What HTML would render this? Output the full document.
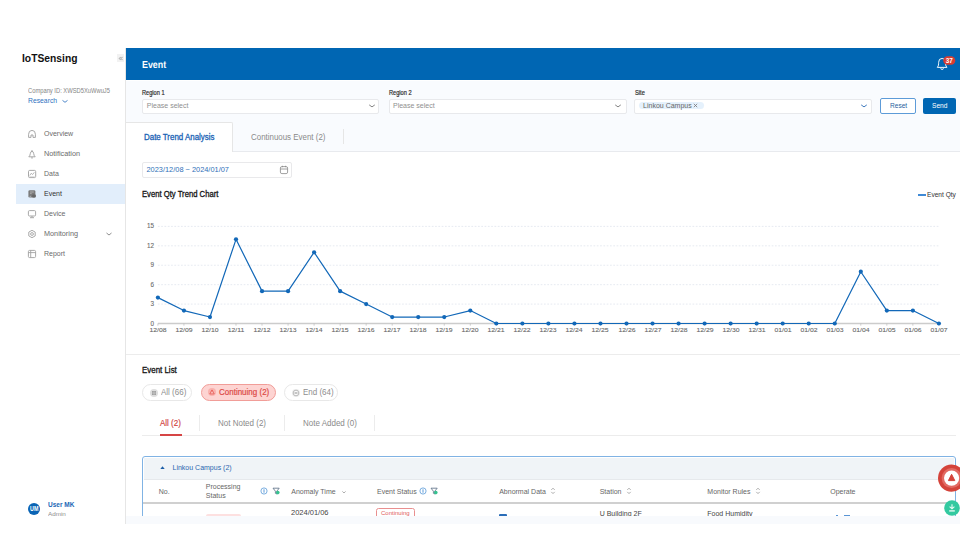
<!DOCTYPE html>
<html><head><meta charset="utf-8">
<style>
html,body{margin:0;padding:0;width:960px;height:540px;overflow:hidden;background:#fff;}
body{font-family:"Liberation Sans",sans-serif;position:relative;}
.a{position:absolute;}
.t{position:absolute;white-space:nowrap;line-height:1;transform-origin:0 0;}
.sb{left:16px;top:48px;width:109px;height:476px;background:#fff;border-right:1px solid #e6e6e6;}
.mi{color:#6b6b6b;font-size:7px;left:44px;}
.ico{position:absolute;left:28px;width:8px;height:8px;}
.hdr{left:126px;top:48px;width:834px;height:32px;background:#0066b3;}
.flt{left:126px;top:80px;width:834px;height:72px;background:#f9fbfe;border-bottom:1px solid #e8eaee;box-sizing:border-box;}
.inp{position:absolute;top:98.5px;height:15.3px;background:#fff;border:1px solid #e8e9ec;border-radius:2px;box-sizing:border-box;}
.lbl{font-size:6.4px;color:#2a2a2a;top:89.5px;-webkit-text-stroke:0.18px #2a2a2a;}
.ph{font-size:7px;color:#8f8f8f;top:101.8px;}

.yl{left:130px;width:24px;text-align:right;font-size:6.3px;color:#6a6a6a;-webkit-text-stroke:0.1px #6a6a6a;}
.xl{top:327px;width:30px;text-align:center;font-size:6.2px;color:#6a6a6a;-webkit-text-stroke:0.1px #6a6a6a;transform:scaleX(1.1);transform-origin:15px 0;}
.chip{position:absolute;top:384.2px;height:16.9px;border-radius:9px;box-sizing:border-box;border:1px solid #e8e8e8;background:#fff;}
.ct{font-size:8.3px;transform:scaleX(0.964);top:387.6px;color:#8e8e8e;}
.st{font-size:8.3px;transform:scaleX(0.964);top:418.5px;color:#8a8a8a;}
.th{font-size:7px;color:#666;}
.td{font-size:7px;color:#454545;top:508.9px;}
</style></head><body>

<!-- sidebar -->
<div class="a sb"></div>
<div class="t" style="left:21.9px;top:52.5px;font-size:11.2px;font-weight:bold;color:#111;transform:scaleX(0.92)">IoTSensing</div>
<div class="a" style="left:116.8px;top:53.8px;width:7.7px;height:8.5px;background:#f2f2f2;"></div>
<svg class="a" style="left:117px;top:54.6px" width="7" height="7" viewBox="0 0 7 7"><path d="M3.7 1.9 L2.3 3.5 L3.7 5.1 M5.5 1.9 L4.1 3.5 L5.5 5.1" fill="none" stroke="#8a8a8a" stroke-width="0.8"/></svg>
<div class="t" style="left:27.9px;top:88.3px;font-size:6.4px;color:#858585;transform:scaleX(0.905)">Company ID: XWSD5XuWwuJ5</div>
<div class="t" style="left:27.9px;top:96.9px;font-size:7px;color:#2f73c0;transform:scaleX(0.97)">Research</div>
<svg class="a" style="left:61px;top:97.5px" width="8" height="6" viewBox="0 0 8 6"><path d="M1.5 2.4 L4 4.3 L6.5 2.4" fill="none" stroke="#2f73c0" stroke-width="0.85"/></svg>

<div class="a" style="left:16px;top:184px;width:109px;height:20px;background:#e2eefb;"></div>
<div class="t mi" style="top:130px">Overview</div>
<div class="t mi" style="top:150px;transform:scaleX(1.04)">Notification</div>
<div class="t mi" style="top:170px">Data</div>
<div class="t mi" style="top:190px;color:#333">Event</div>
<div class="t mi" style="top:210px">Device</div>
<div class="t mi" style="top:230px;transform:scaleX(1.04)">Monitoring</div>
<div class="t mi" style="top:250px">Report</div>


<svg class="a" style="left:26px;top:128px" width="12" height="12" viewBox="0 0 12 12"><path d="M2.6 9.4 L2.6 6.3 Q2.6 2.4 6 2.4 Q9.4 2.4 9.4 6.3 L9.4 9.4 L7 9.4 L7 7 L5 7 L5 9.4 Z" fill="none" stroke="#a3a3a3" stroke-width="0.95" stroke-linejoin="round"/></svg>
<svg class="a" style="left:26px;top:147.5px" width="12" height="12" viewBox="0 0 12 12"><path d="M6 3.3 Q4.7 3.3 4.4 5.3 L3.7 7.8 L2.8 8.8 L9.2 8.8 L8.3 7.8 L7.6 5.3 Q7.3 3.3 6 3.3 Z M5.4 2.7 L6.6 2.7 M5.1 9.9 L6.9 9.9" fill="none" stroke="#a3a3a3" stroke-width="0.95" stroke-linejoin="round"/></svg>
<svg class="a" style="left:26px;top:168px" width="12" height="12" viewBox="0 0 12 12"><rect x="2.5" y="2.4" width="7.2" height="7.2" rx="1.2" fill="none" stroke="#a3a3a3" stroke-width="0.95"/><path d="M3.8 7.4 L5.2 5.3 L6.6 6.5 L8.3 4.3" fill="none" stroke="#a3a3a3" stroke-width="0.8"/><path d="M3.4 8.8 L8.8 8.8" stroke="#bbb" stroke-width="0.6"/></svg>
<svg class="a" style="left:26px;top:188px" width="12" height="12" viewBox="0 0 12 12"><rect x="2.4" y="2.3" width="7" height="7.3" rx="1.3" fill="#7a7a7a"/><path d="M4 4 L7.8 4 M4.2 5.6 L5.6 5.6" stroke="#c9c9c9" stroke-width="0.7"/><rect x="6.2" y="6.6" width="3.6" height="3" rx="0.8" fill="#666"/><path d="M3.6 8.8 L4.8 8.2" stroke="#cde" stroke-width="0.6"/></svg>
<svg class="a" style="left:26px;top:207.5px" width="12" height="12" viewBox="0 0 12 12"><rect x="2.4" y="2.6" width="7.2" height="5.4" rx="1.1" fill="none" stroke="#a3a3a3" stroke-width="0.95"/><path d="M6 8 L6 9.5 M4 9.7 L8 9.7" fill="none" stroke="#a3a3a3" stroke-width="0.95"/></svg>
<svg class="a" style="left:26px;top:227.5px" width="12" height="12" viewBox="0 0 12 12"><path d="M6 2.3 L9.2 4.1 L9.2 7.9 L6 9.7 L2.8 7.9 L2.8 4.1 Z" fill="none" stroke="#a3a3a3" stroke-width="0.95" stroke-linejoin="round"/><circle cx="6" cy="6" r="1.4" fill="none" stroke="#a3a3a3" stroke-width="0.9"/></svg>
<svg class="a" style="left:26px;top:247.5px" width="12" height="12" viewBox="0 0 12 12"><rect x="2.4" y="2.4" width="7.2" height="7.2" rx="1.2" fill="none" stroke="#a3a3a3" stroke-width="0.95"/><path d="M2.4 4.6 L9.6 4.6 M4.7 2.4 L4.7 9.6" stroke="#a3a3a3" stroke-width="0.9"/></svg>
<svg class="a" style="left:104.9px;top:230.5px" width="8" height="6" viewBox="0 0 8 6"><path d="M1.5 2 L4 4 L6.5 2" fill="none" stroke="#7a7a7a" stroke-width="0.85"/></svg>

<!-- header -->
<div class="a hdr"></div>
<div class="t" style="left:142.3px;top:61.4px;font-size:10.2px;font-weight:bold;color:#fff;transform:scaleX(0.87);text-rendering:geometricPrecision">Event</div>

<!-- filter -->
<div class="a flt"></div>
<div class="a" style="left:126px;top:80px;width:834px;height:1px;background:#fff"></div>
<div class="t lbl" style="left:142.1px;transform:scaleX(0.88)">Region 1</div>
<div class="t lbl" style="left:388.5px;transform:scaleX(0.88)">Region 2</div>
<div class="t lbl" style="left:634.7px;transform:scaleX(0.9)">Site</div>
<div class="inp" style="left:142.3px;width:237.1px"></div>
<div class="inp" style="left:388.5px;width:238px"></div>
<div class="inp" style="left:634.4px;width:237.7px"></div>
<div class="t ph" style="left:146.8px">Please select</div>
<div class="t ph" style="left:393px">Please select</div>

<!-- main white -->
<div class="a" style="left:126px;top:152px;width:834px;height:364px;background:#fff"></div>
<div class="a" style="left:126px;top:516px;width:834px;height:8px;background:#f8fafd"></div>


<!-- site tag, chevrons, buttons -->
<div class="a" style="left:639px;top:101.9px;width:64.5px;height:7.5px;border-radius:4px;background:#e5f1fc"></div>
<div class="t" style="left:643.1px;top:102.2px;font-size:7px;color:#666">Linkou Campus</div>
<svg class="a" style="left:692px;top:102px" width="7" height="7" viewBox="0 0 7 7"><path d="M1.8 1.8 L5.2 5.2 M5.2 1.8 L1.8 5.2" stroke="#777" stroke-width="0.8"/></svg>
<svg class="a" style="left:367.9px;top:103.3px" width="8" height="6" viewBox="0 0 8 6"><path d="M1.2 1.9 L4 3.9 L6.8 1.9" fill="none" stroke="#6f6f6f" stroke-width="0.85"/></svg>
<svg class="a" style="left:614px;top:103.3px" width="8" height="6" viewBox="0 0 8 6"><path d="M1.2 1.9 L4 3.9 L6.8 1.9" fill="none" stroke="#6f6f6f" stroke-width="0.85"/></svg>
<svg class="a" style="left:860.3px;top:103.3px" width="8" height="6" viewBox="0 0 8 6"><path d="M1.2 1.9 L4 3.9 L6.8 1.9" fill="none" stroke="#2b6cb5" stroke-width="0.9"/></svg>
<div class="a" style="left:880.4px;top:97.8px;width:35.2px;height:16px;box-sizing:border-box;border:1px solid #5d9bd8;border-radius:2px;background:#fff"></div>
<div class="t" style="left:889.5px;top:102.2px;font-size:7px;color:#2a5f9e;transform:scaleX(0.94)">Reset</div>
<div class="a" style="left:923.3px;top:97.8px;width:32.7px;height:16px;border-radius:2px;background:#0066b3"></div>
<div class="t" style="left:931.9px;top:102.2px;font-size:7px;color:#fff;transform:scaleX(0.94)">Send</div>

<!-- bell -->
<svg class="a" style="left:934px;top:55px" width="24" height="17" viewBox="0 0 24 17">
<path d="M3.3 12.4 Q4.6 11.2 4.6 8.8 L4.6 7.4 Q4.6 3.4 8.1 3.4 Q11.6 3.4 11.6 7.4 L11.6 8.8 Q11.6 11.2 12.9 12.4 Z" fill="none" stroke="#fff" stroke-width="0.95" stroke-linejoin="round"/>
<path d="M6.8 13.2 A1.3 1.3 0 0 0 9.4 13.2" fill="none" stroke="#fff" stroke-width="0.9"/>
<rect x="9.3" y="1.2" width="12" height="8.5" rx="4.25" fill="#d83c31"/>
</svg>
<div class="t" style="left:943.3px;top:57.5px;width:12px;text-align:center;font-size:6.4px;font-weight:bold;color:#fff;">37</div>

<!-- tabs -->
<div class="a" style="left:126px;top:121.6px;width:107px;height:30.4px;background:#fff;border-top:1px solid #e6e6e6;border-right:1px solid #e6e6e6;border-top-right-radius:2px;box-sizing:border-box"></div>
<div class="t" style="left:144px;top:133px;font-size:8.3px;color:#1b63b5;-webkit-text-stroke:0.3px #1b63b5;transform:scaleX(0.955)">Date Trend Analysis</div>
<div class="t" style="left:251px;top:133px;font-size:8.3px;color:#8a8a8a;transform:scaleX(0.955)">Continuous Event (2)</div>
<div class="a" style="left:343px;top:129px;width:1px;height:15.3px;background:#e6e6e6"></div>

<!-- date input -->
<div class="a" style="left:142.3px;top:162.3px;width:149.4px;height:15.6px;box-sizing:border-box;border:1px solid #e9e9eb;border-radius:2px;background:#fff"></div>
<div class="t" style="left:146.5px;top:166.3px;font-size:7.4px;color:#3070b8">2023/12/08 ~ 2024/01/07</div>
<svg class="a" style="left:279px;top:165px" width="10" height="10" viewBox="0 0 10 10"><rect x="1.4" y="1.6" width="7.2" height="7" rx="1.5" fill="none" stroke="#888" stroke-width="0.8"/><line x1="1.4" y1="4" x2="8.6" y2="4" stroke="#888" stroke-width="0.8"/><line x1="3.4" y1="0.8" x2="3.4" y2="2.2" stroke="#888" stroke-width="0.8"/><line x1="6.6" y1="0.8" x2="6.6" y2="2.2" stroke="#888" stroke-width="0.8"/></svg>

<!-- chart -->
<div class="t" style="left:142.3px;top:190px;font-size:8.3px;color:#141414;-webkit-text-stroke:0.3px #141414;transform:scaleX(0.925)">Event Qty Trend Chart</div>
<div class="a" style="left:917.8px;top:194.3px;width:8.1px;height:1.3px;background:#3f8ad6"></div>
<div class="t" style="left:926.9px;top:191px;font-size:7px;color:#333;transform:scaleX(0.94)">Event Qty</div>
<svg class="a" style="left:0;top:0" width="960" height="540" viewBox="0 0 960 540">
<line x1="157.9" y1="304.08" x2="938.9" y2="304.08" stroke="#dfe5ee" stroke-width="0.8" stroke-dasharray="1.7 1.6"/>
<line x1="157.9" y1="284.66" x2="938.9" y2="284.66" stroke="#dfe5ee" stroke-width="0.8" stroke-dasharray="1.7 1.6"/>
<line x1="157.9" y1="265.24" x2="938.9" y2="265.24" stroke="#dfe5ee" stroke-width="0.8" stroke-dasharray="1.7 1.6"/>
<line x1="157.9" y1="245.82" x2="938.9" y2="245.82" stroke="#dfe5ee" stroke-width="0.8" stroke-dasharray="1.7 1.6"/>
<line x1="157.9" y1="226.40" x2="938.9" y2="226.40" stroke="#dfe5ee" stroke-width="0.8" stroke-dasharray="1.7 1.6"/>
<line x1="157.9" y1="323.50" x2="938.9" y2="323.50" stroke="#cccccc" stroke-width="1.3"/>
<line x1="157.90" y1="323.50" x2="157.90" y2="325.70" stroke="#bbb" stroke-width="0.7"/>
<line x1="183.93" y1="323.50" x2="183.93" y2="325.70" stroke="#bbb" stroke-width="0.7"/>
<line x1="209.97" y1="323.50" x2="209.97" y2="325.70" stroke="#bbb" stroke-width="0.7"/>
<line x1="236.00" y1="323.50" x2="236.00" y2="325.70" stroke="#bbb" stroke-width="0.7"/>
<line x1="262.03" y1="323.50" x2="262.03" y2="325.70" stroke="#bbb" stroke-width="0.7"/>
<line x1="288.07" y1="323.50" x2="288.07" y2="325.70" stroke="#bbb" stroke-width="0.7"/>
<line x1="314.10" y1="323.50" x2="314.10" y2="325.70" stroke="#bbb" stroke-width="0.7"/>
<line x1="340.13" y1="323.50" x2="340.13" y2="325.70" stroke="#bbb" stroke-width="0.7"/>
<line x1="366.17" y1="323.50" x2="366.17" y2="325.70" stroke="#bbb" stroke-width="0.7"/>
<line x1="392.20" y1="323.50" x2="392.20" y2="325.70" stroke="#bbb" stroke-width="0.7"/>
<line x1="418.23" y1="323.50" x2="418.23" y2="325.70" stroke="#bbb" stroke-width="0.7"/>
<line x1="444.27" y1="323.50" x2="444.27" y2="325.70" stroke="#bbb" stroke-width="0.7"/>
<line x1="470.30" y1="323.50" x2="470.30" y2="325.70" stroke="#bbb" stroke-width="0.7"/>
<line x1="496.33" y1="323.50" x2="496.33" y2="325.70" stroke="#bbb" stroke-width="0.7"/>
<line x1="522.37" y1="323.50" x2="522.37" y2="325.70" stroke="#bbb" stroke-width="0.7"/>
<line x1="548.40" y1="323.50" x2="548.40" y2="325.70" stroke="#bbb" stroke-width="0.7"/>
<line x1="574.43" y1="323.50" x2="574.43" y2="325.70" stroke="#bbb" stroke-width="0.7"/>
<line x1="600.47" y1="323.50" x2="600.47" y2="325.70" stroke="#bbb" stroke-width="0.7"/>
<line x1="626.50" y1="323.50" x2="626.50" y2="325.70" stroke="#bbb" stroke-width="0.7"/>
<line x1="652.53" y1="323.50" x2="652.53" y2="325.70" stroke="#bbb" stroke-width="0.7"/>
<line x1="678.57" y1="323.50" x2="678.57" y2="325.70" stroke="#bbb" stroke-width="0.7"/>
<line x1="704.60" y1="323.50" x2="704.60" y2="325.70" stroke="#bbb" stroke-width="0.7"/>
<line x1="730.63" y1="323.50" x2="730.63" y2="325.70" stroke="#bbb" stroke-width="0.7"/>
<line x1="756.67" y1="323.50" x2="756.67" y2="325.70" stroke="#bbb" stroke-width="0.7"/>
<line x1="782.70" y1="323.50" x2="782.70" y2="325.70" stroke="#bbb" stroke-width="0.7"/>
<line x1="808.73" y1="323.50" x2="808.73" y2="325.70" stroke="#bbb" stroke-width="0.7"/>
<line x1="834.77" y1="323.50" x2="834.77" y2="325.70" stroke="#bbb" stroke-width="0.7"/>
<line x1="860.80" y1="323.50" x2="860.80" y2="325.70" stroke="#bbb" stroke-width="0.7"/>
<line x1="886.83" y1="323.50" x2="886.83" y2="325.70" stroke="#bbb" stroke-width="0.7"/>
<line x1="912.87" y1="323.50" x2="912.87" y2="325.70" stroke="#bbb" stroke-width="0.7"/>
<line x1="938.90" y1="323.50" x2="938.90" y2="325.70" stroke="#bbb" stroke-width="0.7"/>
<polyline fill="none" stroke="#1268b8" stroke-width="1.2" stroke-linejoin="round" points="157.90,297.61 183.93,310.55 209.97,317.03 236.00,239.35 262.03,291.13 288.07,291.13 314.10,252.29 340.13,291.13 366.17,304.08 392.20,317.03 418.23,317.03 444.27,317.03 470.30,310.55 496.33,323.50 522.37,323.50 548.40,323.50 574.43,323.50 600.47,323.50 626.50,323.50 652.53,323.50 678.57,323.50 704.60,323.50 730.63,323.50 756.67,323.50 782.70,323.50 808.73,323.50 834.77,323.50 860.80,271.71 886.83,310.55 912.87,310.55 938.90,323.50"/>
<circle cx="157.90" cy="297.61" r="2.1" fill="#1268b8"/>
<circle cx="183.93" cy="310.55" r="2.1" fill="#1268b8"/>
<circle cx="209.97" cy="317.03" r="2.1" fill="#1268b8"/>
<circle cx="236.00" cy="239.35" r="2.1" fill="#1268b8"/>
<circle cx="262.03" cy="291.13" r="2.1" fill="#1268b8"/>
<circle cx="288.07" cy="291.13" r="2.1" fill="#1268b8"/>
<circle cx="314.10" cy="252.29" r="2.1" fill="#1268b8"/>
<circle cx="340.13" cy="291.13" r="2.1" fill="#1268b8"/>
<circle cx="366.17" cy="304.08" r="2.1" fill="#1268b8"/>
<circle cx="392.20" cy="317.03" r="2.1" fill="#1268b8"/>
<circle cx="418.23" cy="317.03" r="2.1" fill="#1268b8"/>
<circle cx="444.27" cy="317.03" r="2.1" fill="#1268b8"/>
<circle cx="470.30" cy="310.55" r="2.1" fill="#1268b8"/>
<circle cx="496.33" cy="323.50" r="2.1" fill="#1268b8"/>
<circle cx="522.37" cy="323.50" r="2.1" fill="#1268b8"/>
<circle cx="548.40" cy="323.50" r="2.1" fill="#1268b8"/>
<circle cx="574.43" cy="323.50" r="2.1" fill="#1268b8"/>
<circle cx="600.47" cy="323.50" r="2.1" fill="#1268b8"/>
<circle cx="626.50" cy="323.50" r="2.1" fill="#1268b8"/>
<circle cx="652.53" cy="323.50" r="2.1" fill="#1268b8"/>
<circle cx="678.57" cy="323.50" r="2.1" fill="#1268b8"/>
<circle cx="704.60" cy="323.50" r="2.1" fill="#1268b8"/>
<circle cx="730.63" cy="323.50" r="2.1" fill="#1268b8"/>
<circle cx="756.67" cy="323.50" r="2.1" fill="#1268b8"/>
<circle cx="782.70" cy="323.50" r="2.1" fill="#1268b8"/>
<circle cx="808.73" cy="323.50" r="2.1" fill="#1268b8"/>
<circle cx="834.77" cy="323.50" r="2.1" fill="#1268b8"/>
<circle cx="860.80" cy="271.71" r="2.1" fill="#1268b8"/>
<circle cx="886.83" cy="310.55" r="2.1" fill="#1268b8"/>
<circle cx="912.87" cy="310.55" r="2.1" fill="#1268b8"/>
<circle cx="938.90" cy="323.50" r="2.1" fill="#1268b8"/>
</svg>
<div class="t yl" style="top:320.57px">0</div>
<div class="t yl" style="top:301.15px">3</div>
<div class="t yl" style="top:281.73px">6</div>
<div class="t yl" style="top:262.31px">9</div>
<div class="t yl" style="top:242.89px">12</div>
<div class="t yl" style="top:223.47px">15</div>
<div class="t xl" style="left:142.90px">12/08</div>
<div class="t xl" style="left:168.93px">12/09</div>
<div class="t xl" style="left:194.97px">12/10</div>
<div class="t xl" style="left:221.00px">12/11</div>
<div class="t xl" style="left:247.03px">12/12</div>
<div class="t xl" style="left:273.07px">12/13</div>
<div class="t xl" style="left:299.10px">12/14</div>
<div class="t xl" style="left:325.13px">12/15</div>
<div class="t xl" style="left:351.17px">12/16</div>
<div class="t xl" style="left:377.20px">12/17</div>
<div class="t xl" style="left:403.23px">12/18</div>
<div class="t xl" style="left:429.27px">12/19</div>
<div class="t xl" style="left:455.30px">12/20</div>
<div class="t xl" style="left:481.33px">12/21</div>
<div class="t xl" style="left:507.37px">12/22</div>
<div class="t xl" style="left:533.40px">12/23</div>
<div class="t xl" style="left:559.43px">12/24</div>
<div class="t xl" style="left:585.47px">12/25</div>
<div class="t xl" style="left:611.50px">12/26</div>
<div class="t xl" style="left:637.53px">12/27</div>
<div class="t xl" style="left:663.57px">12/28</div>
<div class="t xl" style="left:689.60px">12/29</div>
<div class="t xl" style="left:715.63px">12/30</div>
<div class="t xl" style="left:741.67px">12/31</div>
<div class="t xl" style="left:767.70px">01/01</div>
<div class="t xl" style="left:793.73px">01/02</div>
<div class="t xl" style="left:819.77px">01/03</div>
<div class="t xl" style="left:845.80px">01/04</div>
<div class="t xl" style="left:871.83px">01/05</div>
<div class="t xl" style="left:897.87px">01/06</div>
<div class="t xl" style="left:923.90px">01/07</div>

<!-- separator -->
<div class="a" style="left:126px;top:354px;width:834px;height:1px;background:#ececec"></div>
<div class="t" style="left:142.1px;top:365.5px;font-size:8.3px;color:#141414;-webkit-text-stroke:0.3px #141414;transform:scaleX(0.955)">Event List</div>

<!-- chips -->
<div class="chip" style="left:141.9px;width:50.5px"></div>
<svg class="a" style="left:149.5px;top:388.5px" width="8" height="8" viewBox="0 0 8 8"><circle cx="4" cy="4" r="4" fill="#dedede"/><rect x="2.1" y="2.1" width="1.6" height="1.6" rx="0.3" fill="#949494"/><rect x="4.3" y="2.1" width="1.6" height="1.6" rx="0.3" fill="#949494"/><rect x="2.1" y="4.3" width="1.6" height="1.6" rx="0.3" fill="#949494"/><rect x="4.3" y="4.3" width="1.6" height="1.6" rx="0.3" fill="#949494"/></svg>
<div class="t ct" style="left:160.7px">All (66)</div>
<div class="chip" style="left:200.5px;width:75.4px;background:#fdd4d2;border-color:#f19d98"></div>
<svg class="a" style="left:207.8px;top:388.3px" width="8" height="8" viewBox="0 0 8 8"><circle cx="4" cy="4" r="4" fill="#f9b2ae"/><path d="M4 1.9 L6.2 5.9 L1.8 5.9 Z" fill="none" stroke="#e65550" stroke-width="0.85" stroke-linejoin="round"/><path d="M2.6 4.9 L5.4 4.9" stroke="#fbd0cd" stroke-width="0.5"/></svg>
<div class="t ct" style="left:219.2px;color:#dc4a46;-webkit-text-stroke:0.2px #dc4a46">Continuing (2)</div>
<div class="chip" style="left:284px;width:54.4px"></div>
<svg class="a" style="left:291.5px;top:388.7px" width="8" height="8" viewBox="0 0 8 8"><circle cx="4" cy="4" r="4" fill="#ececec"/><circle cx="4" cy="4" r="2.8" fill="#fafafa" stroke="#a8a8a8" stroke-width="0.75"/><path d="M2.5 4 L5.5 4" stroke="#8f8f8f" stroke-width="1"/></svg>
<div class="t ct" style="left:302.8px">End (64)</div>

<!-- sub tabs -->
<div class="a" style="left:142px;top:435px;width:814px;height:1px;background:#ececec"></div>
<div class="t st" style="left:160px;color:#d03c3c;-webkit-text-stroke:0.15px #d03c3c">All (2)</div>
<div class="a" style="left:160px;top:434.4px;width:21.5px;height:1.6px;background:#d64545"></div>
<div class="a" style="left:199.3px;top:415px;width:1px;height:15.8px;background:#ececec"></div>
<div class="t st" style="left:218px">Not Noted (2)</div>
<div class="a" style="left:284.3px;top:415px;width:1px;height:15.8px;background:#ececec"></div>
<div class="t st" style="left:303px">Note Added (0)</div>
<div class="a" style="left:374.3px;top:415px;width:1px;height:15.8px;background:#ececec"></div>


<!-- table -->
<div class="a" style="left:142px;top:456px;width:814px;height:70px;box-sizing:border-box;border:1px solid #80b3e4;border-radius:3px;background:#fff"></div>
<div class="a" style="left:144px;top:458px;width:810px;height:21px;background:#f0f4f7;border-bottom:0.5px solid #e6e9ec"></div>
<svg class="a" style="left:159px;top:465px" width="7" height="5" viewBox="0 0 7 5"><path d="M1.3 4 L3.5 1.2 L5.7 4 Z" fill="#1c5ea8"/></svg>
<div class="t" style="left:172.5px;top:464.4px;font-size:7px;color:#2a67b0">Linkou Campus (2)</div>
<div class="a" style="left:143px;top:502px;width:812px;height:2px;background:#d0d0d0"></div>
<div class="t th" style="left:158.7px;top:487.8px">No.</div>
<div class="t th" style="left:205.8px;top:483.3px">Processing</div>
<div class="t th" style="left:205.8px;top:491.6px">Status</div>
<div class="t th" style="left:291.3px;top:487.8px">Anomaly Time</div>
<div class="t th" style="left:377px;top:487.8px">Event Status</div>
<div class="t th" style="left:499.2px;top:487.8px">Abnormal Data</div>
<div class="t th" style="left:599.7px;top:487.8px">Station</div>
<div class="t th" style="left:707.3px;top:487.8px">Monitor Rules</div>
<div class="t th" style="left:830.2px;top:487.8px">Operate</div>


<svg class="a" style="left:260.3px;top:487px" width="8" height="8" viewBox="0 0 8 8"><circle cx="4" cy="4" r="3.1" fill="none" stroke="#5b9bd8" stroke-width="0.8"/><path d="M4 2.3 L4 5.7" stroke="#4a90d6" stroke-width="0.9"/></svg>
<svg class="a" style="left:271.5px;top:487px" width="8" height="8" viewBox="0 0 8 8"><path d="M1 1.2 L7.2 1.2 L4.8 4.2 L4.8 7 L3.4 6.3 L3.4 4.2 Z" fill="none" stroke="#556b82" stroke-width="0.8" stroke-linejoin="round"/><circle cx="5.8" cy="5.6" r="1.8" fill="#36c28f"/></svg>
<svg class="a" style="left:418.8px;top:487px" width="8" height="8" viewBox="0 0 8 8"><circle cx="4" cy="4" r="3.1" fill="none" stroke="#5b9bd8" stroke-width="0.8"/><path d="M4 2.3 L4 5.7" stroke="#4a90d6" stroke-width="0.9"/></svg>
<svg class="a" style="left:429.8px;top:487px" width="8" height="8" viewBox="0 0 8 8"><path d="M1 1.2 L7.2 1.2 L4.8 4.2 L4.8 7 L3.4 6.3 L3.4 4.2 Z" fill="none" stroke="#556b82" stroke-width="0.8" stroke-linejoin="round"/><circle cx="5.8" cy="5.6" r="1.8" fill="#36c28f"/></svg>
<svg class="a" style="left:340.5px;top:489px" width="6" height="6" viewBox="0 0 6 6"><path d="M1.4 2.4 L3 4 L4.6 2.4" fill="none" stroke="#999" stroke-width="0.8"/></svg>
<svg class="a" style="left:550.4px;top:486px" width="6" height="10" viewBox="0 0 6 10"><path d="M1.3 3.9 L3 2.2 L4.7 3.9 M1.3 5.9 L3 7.6 L4.7 5.9" fill="none" stroke="#a3a3a3" stroke-width="0.9"/></svg>
<svg class="a" style="left:625.7px;top:486px" width="6" height="10" viewBox="0 0 6 10"><path d="M1.3 3.9 L3 2.2 L4.7 3.9 M1.3 5.9 L3 7.6 L4.7 5.9" fill="none" stroke="#a3a3a3" stroke-width="0.9"/></svg>
<svg class="a" style="left:754.9px;top:486px" width="6" height="10" viewBox="0 0 6 10"><path d="M1.3 3.9 L3 2.2 L4.7 3.9 M1.3 5.9 L3 7.6 L4.7 5.9" fill="none" stroke="#a3a3a3" stroke-width="0.9"/></svg>
<div class="t td" style="left:291.3px;transform:scaleX(1.07)">2024/01/06</div>
<div class="a" style="left:376.3px;top:508.3px;width:38.4px;height:12px;box-sizing:border-box;border:1px solid #e98f8f;border-radius:2.5px"></div>
<div class="t" style="left:381px;top:510px;font-size:6px;color:#e05a5a">Continuing</div>
<div class="a" style="left:206px;top:514px;width:35px;height:6px;border-radius:2px;background:#fde0e0"></div>
<div class="a" style="left:499px;top:514px;width:8px;height:2.5px;border-radius:1px;background:#2a6db8"></div>
<div class="t td" style="left:599.7px;top:509.9px">U Building 2F</div>
<div class="t td" style="left:707.3px;top:509.9px">Food Humidity</div>
<div class="a" style="left:836px;top:514.8px;width:2px;height:1.5px;background:#5a95d5"></div>
<div class="a" style="left:844px;top:514.6px;width:6px;height:1.6px;background:#5a95d5"></div>

<!-- floating buttons -->
<svg class="a" style="left:936px;top:463px" width="24" height="30" viewBox="0 0 24 30">
<circle cx="15.6" cy="15.1" r="13.6" fill="#d4433a"/>
<circle cx="15.6" cy="15.1" r="10" fill="#e26a62"/>
<circle cx="15.6" cy="15.1" r="7.6" fill="#fff"/>
<path d="M15.6 11.3 L18.8 17.6 L12.4 17.6 Z" fill="#d4433a" stroke="#d4433a" stroke-width="1" stroke-linejoin="round"/>
</svg>
<svg class="a" style="left:942px;top:498px" width="18" height="20" viewBox="0 0 18 20">
<circle cx="10" cy="10" r="7.8" fill="#33c9a0"/>
<path d="M10 6.2 L10 10.4 M7.6 8.7 L10 10.8 L12.4 8.7" fill="none" stroke="#e8fbf4" stroke-width="1.1"/>
<path d="M7.2 12.9 L12.8 12.9" fill="none" stroke="#d9f6ec" stroke-width="1.5"/>
</svg>

<!-- bottom band (on top of table) -->
<div class="a" style="left:126px;top:516px;width:834px;height:8px;background:#f8fafd"></div>
<div class="a" style="left:125px;top:524px;width:835px;height:16px;background:#fff"></div>

<!-- user -->
<div class="a" style="left:27.9px;top:503.1px;width:12.4px;height:12.4px;border-radius:50%;background:#0a64b4"></div>
<div class="t" style="left:27.9px;top:506.2px;width:12.4px;text-align:center;font-size:6.3px;font-weight:bold;color:#fff;transform:scaleX(0.85);transform-origin:6.2px 0">UM</div>
<div class="t" style="left:48.1px;top:500.9px;font-size:7px;font-weight:bold;color:#2266b5;transform:scaleX(0.93)">User MK</div>
<div class="t" style="left:48.1px;top:511.2px;font-size:6px;color:#8e8e8e;transform:scaleX(1.05)">Admin</div>
</body></html>
